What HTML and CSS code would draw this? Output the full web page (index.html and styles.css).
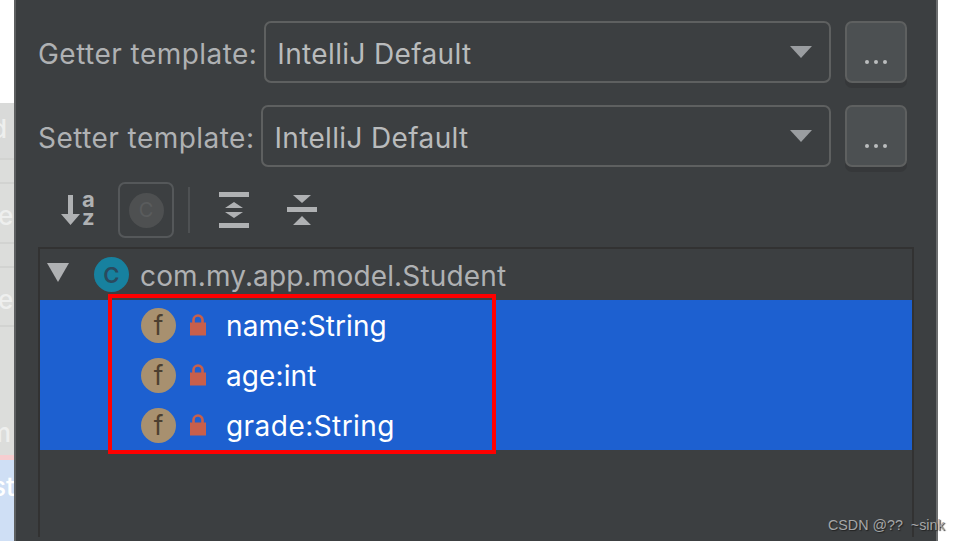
FILE: index.html
```html
<!DOCTYPE html>
<html lang="en">
<head>
<meta charset="utf-8">
<title>Getter and Setter</title>
<link rel="stylesheet" href="styles.css">
</head>
<body>
<div class="page">
  <aside class="behind">
    <div class="behind-blank"></div>
    <div class="behind-row r1"><span class="ghost">d</span></div>
    <div class="behind-row r2"></div>
    <div class="behind-row r3"><span class="ghost">el</span></div>
    <div class="behind-row r4"></div>
    <div class="behind-row r5"><span class="ghost">ell</span></div>
    <div class="behind-row r6"></div>
    <div class="behind-row r7"><span class="ghost">m</span></div>
    <div class="behind-pink"></div>
    <div class="behind-sel"><span class="ghost">st</span></div>
  </aside>
  <main class="dialog">
    <div class="form-row row-get">
      <label class="lbl">Getter template:</label>
      <div class="combo"><span>IntelliJ Default</span><i class="caret"></i></div>
      <button class="more"><span class="dots"><b></b><b></b><b></b></span></button>
    </div>
    <div class="form-row row-set">
      <label class="lbl">Setter template:</label>
      <div class="combo"><span>IntelliJ Default</span><i class="caret"></i></div>
      <button class="more"><span class="dots"><b></b><b></b><b></b></span></button>
    </div>
    <div class="toolbar">
      <div class="tool">
        <svg width="36" height="36" viewBox="0 0 36 36"><path d="M9 3h5v19h7l-9.500 11L2 22h7z" fill="#afb1b3"/><text x="23" y="15" class="sort-letter">a</text><text x="23" y="33" class="sort-letter">z</text></svg>
      </div>
      <div class="tool toggled"><span class="c-off">C</span></div>
      <div class="tool-sep"></div>
      <div class="tool">
        <svg width="32" height="36" viewBox="0 0 32 36"><path d="M1 0h30v5H1zM1 31h30v5H1z" fill="#afb1b3"/><path d="M16 10l9 6H7zM7 20h18l-9 6z" fill="#afb1b3"/></svg>
      </div>
      <div class="tool">
        <svg width="32" height="36" viewBox="0 0 32 36"><path d="M1 15h30v5H1z" fill="#afb1b3"/><path d="M7 3h18l-9 8zM16 24l9 9H7z" fill="#afb1b3"/></svg>
      </div>
    </div>
    <section class="tree">
      <div class="node root">
        <i class="twisty"></i>
        <span class="badge class-badge">C</span>
        <span class="root-name">com.my.app.model.Student</span>
      </div>
      <div class="node field"><span class="badge field-badge">f</span><svg class="lock" width="16" height="22" viewBox="0 0 16 22"><path d="M3.500 9V6a4.500 4.500 0 0 1 9 0v3" fill="none" stroke="#c75f4b" stroke-width="2.600"/><rect y="8.500" width="16" height="13" fill="#c75f4b"/></svg><span class="field-name">name:String</span></div>
      <div class="node field"><span class="badge field-badge">f</span><svg class="lock" width="16" height="22" viewBox="0 0 16 22"><path d="M3.500 9V6a4.500 4.500 0 0 1 9 0v3" fill="none" stroke="#c75f4b" stroke-width="2.600"/><rect y="8.500" width="16" height="13" fill="#c75f4b"/></svg><span class="field-name">age:int</span></div>
      <div class="node field"><span class="badge field-badge">f</span><svg class="lock" width="16" height="22" viewBox="0 0 16 22"><path d="M3.500 9V6a4.500 4.500 0 0 1 9 0v3" fill="none" stroke="#c75f4b" stroke-width="2.600"/><rect y="8.500" width="16" height="13" fill="#c75f4b"/></svg><span class="field-name wide">grade:String</span></div>
      <div class="highlight"></div>
    </section>
  </main>
  <div class="outside"></div>
  <div class="watermark">CSDN @??&nbsp;&nbsp;~sink</div>
</div>
</body>
</html>
```
FILE: styles.css
```css
* { box-sizing: border-box; }
html, body { margin: 0; height: 100%; }
body { background: #fff; overflow: hidden; font-family: Inter, "Noto Sans", sans-serif; }
.page { position: relative; display: flex; width: 962px; height: 541px; overflow: hidden; }

.behind { width: 14px; flex: none; overflow: hidden; display: flex; flex-direction: column; background: #dcdddb; }
.behind-blank { height: 103px; background: #fff; }
.behind-row { border-bottom: 2px solid #d2d3d1; overflow: hidden; font-size: 26px; line-height: 44px; color: #eeefee; font-weight: 500; }
.r1 { height: 57px; background: #d9dad9; }
.r2 { height: 24px; }
.r3 { height: 60px; }
.r4 { height: 24px; }
.r5 { height: 59px; }
.r6 { height: 1px; border: 0; }
.r7 { height: 127px; border: 0; display: flex; align-items: flex-end; }
.behind-pink { height: 5px; background: #f6cdd0; }
.behind-sel { flex: 1; background: #cfdff5; color: #fff; font-size: 26px; font-weight: 500; line-height: 54px; overflow: hidden; }
.ghost { display: block; white-space: nowrap; }
.r1 .ghost { margin-left: -9px; line-height: 52px; }
.r3 .ghost { margin-left: -2px; line-height: 64px; }
.r5 .ghost { margin-left: -2px; line-height: 64px; }
.r7 .ghost { margin-left: -12px; }
.behind-sel .ghost { margin-left: -8px; }

.dialog { width: 924px; flex: none; background: #3c3f41; border-left: 2px solid #5e6061; border-right: 2px solid #6c6e6f; padding: 21px 0 0 22px; }
.outside { flex: 1; background: #fff; }

.form-row { display: flex; align-items: center; height: 62px; width: 869px; }
.row-set { margin-top: 22px; }
.lbl { font-size: 28px; color: #afb1b3; white-space: nowrap; margin-right: 7px; letter-spacing: .46px; padding-top: 3px; }
.combo { flex: 1; height: 62px; border: 2px solid #5e6060; border-radius: 7px; display: flex; align-items: center; justify-content: space-between; padding: 3px 17px 0 11px; font-size: 28px; color: #b9bbbc; letter-spacing: .35px; }
.caret { width: 0; height: 0; border-left: 11px solid transparent; border-right: 11px solid transparent; border-top: 12px solid #9a9da0; margin-top: -3px; }
.more { margin-left: 14px; width: 62px; height: 62px; flex: none; padding: 0; background: #4c5052; border: 2px solid #5e6060; border-radius: 7px; box-shadow: 0 5px 0 #36383a; display: flex; justify-content: center; align-items: flex-end; }
.dots { display: flex; gap: 5px; margin-bottom: 17px; }
.dots b { width: 4px; height: 4px; border-radius: 50%; background: #bbbdbe; }

.toolbar { display: flex; align-items: center; height: 56px; margin-top: 15px; padding-left: 21px; }
.tool { display: flex; align-items: center; justify-content: center; width: 36px; height: 56px; }
.tool + .tool { margin-left: 32px; }
.tool.toggled { width: 56px; margin-left: 23px; border: 2px solid #55585a; border-radius: 7px; }
.tool-sep { width: 2px; height: 46px; margin: 0 26px 0 14px; background: #4e5153; }
.tool-sep + .tool { margin-left: 0; }
.sort-letter { font-family: Inter, sans-serif; font-size: 22px; font-weight: 700; fill: #afb1b3; }
.c-off { width: 35px; height: 35px; border-radius: 50%; background: #4e5051; color: #5a5c5d; font-size: 20px; display: flex; align-items: center; justify-content: center; }

.tree { position: relative; width: 876px; height: 290px; margin-top: 9px; border: solid #323232; border-width: 2px 2px 0; }
.node { display: flex; align-items: center; height: 50px; }
.root { height: 51px; padding-left: 7px; font-size: 28px; color: #afb1b3; letter-spacing: .15px; }
.twisty { width: 0; height: 0; border-left: 11px solid transparent; border-right: 11px solid transparent; border-top: 19px solid #afb1b3; margin-top: -4px; }
.badge { width: 35px; height: 35px; border-radius: 50%; display: flex; align-items: center; justify-content: center; flex: none; }
.class-badge { margin-left: 25px; background: #17819f; color: #2a4a5e; font-size: 22px; font-weight: 600; }
.root-name { margin-left: 11px; padding-top: 2px; }
.field { background: #1d60d0; padding-left: 101px; color: #fff; font-size: 28px; letter-spacing: .1px; }
.field-badge { background: #a8906f; color: #4c3f30; font-size: 26px; }
.lock { margin-left: 14px; flex: none; }
.field-name { margin-left: 20px; padding-top: 2px; }
.field-name.wide { letter-spacing: .45px; }
.highlight { position: absolute; left: 68px; top: 45px; width: 388px; height: 160px; border: 4px solid #f00; }

.watermark { position: absolute; left: 828px; top: 517px; font: 14.300px "Liberation Sans", sans-serif; color: #a5a6a7; text-shadow: 1px 1px 1px #222; white-space: pre; }
```
